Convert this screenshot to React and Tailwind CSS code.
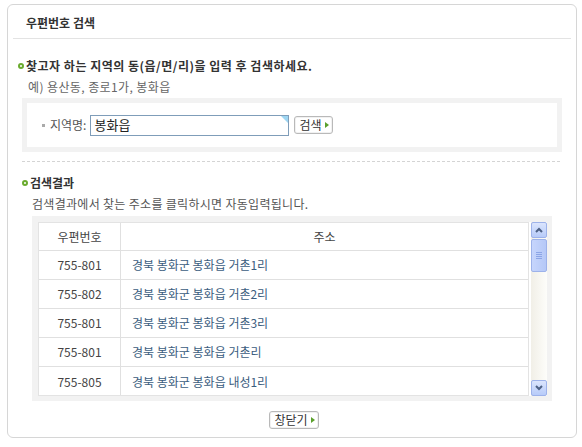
import React from "react";

const rows = [
  { zip: "755-801", addr: "경북 봉화군 봉화읍 거촌1리" },
  { zip: "755-802", addr: "경북 봉화군 봉화읍 거촌2리" },
  { zip: "755-801", addr: "경북 봉화군 봉화읍 거촌3리" },
  { zip: "755-801", addr: "경북 봉화군 봉화읍 거촌리" },
  { zip: "755-805", addr: "경북 봉화군 봉화읍 내성1리" },
];

function Bullet() {
  return (
    <span className="inline-block w-[6px] h-[6px] rounded-full border-2 border-[#6aab2e] bg-white" />
  );
}

function SmallButton({ children }) {
  return (
    <button className="h-[18px] pl-[4px] pr-[3px] flex items-center gap-[3px] rounded-[3px] border border-[#b9b9b9] bg-white text-[12px] text-[#333] leading-none shadow-[inset_0_0_0_1px_#f1f1f1]">
      {children}
      <span className="w-0 h-0 border-y-[3px] border-y-transparent border-l-[4px] border-l-[#5aa02c]" />
    </button>
  );
}

function ScrollBar() {
  return (
    <div className="w-[16px] ml-[2px] flex flex-col bg-gradient-to-r from-[#f1efe7] to-[#fdfdfa]">
      {/* up */}
      <div className="h-[16px] rounded-[2px] border border-[#9db2ea] bg-gradient-to-b from-[#dbe5fd] to-[#b7cbf9] flex items-center justify-center">
        <svg width="8" height="6" viewBox="0 0 8 6">
          <path d="M1 5 L4 2 L7 5" stroke="#4d6185" strokeWidth="2" fill="none" />
        </svg>
      </div>
      {/* thumb */}
      <div className="h-[33px] mt-[1px] rounded-[2px] border border-[#9db2ea] bg-gradient-to-r from-[#c6d5fc] to-[#b5c8f7] flex flex-col items-center justify-center gap-[1px]">
        <span className="w-[6px] h-[1px] bg-[#8ca5e6]" />
        <span className="w-[6px] h-[1px] bg-[#8ca5e6]" />
        <span className="w-[6px] h-[1px] bg-[#8ca5e6]" />
        <span className="w-[6px] h-[1px] bg-[#8ca5e6]" />
      </div>
      <div className="flex-1" />
      {/* down */}
      <div className="h-[16px] rounded-[2px] border border-[#9db2ea] bg-gradient-to-b from-[#dbe5fd] to-[#b7cbf9] flex items-center justify-center">
        <svg width="8" height="6" viewBox="0 0 8 6">
          <path d="M1 1 L4 4 L7 1" stroke="#4d6185" strokeWidth="2" fill="none" />
        </svg>
      </div>
    </div>
  );
}

export default function App() {
  return (
    <div
      className="w-[582px] h-[447px] bg-white pt-[4px] pl-[7px]"
      style={{ fontFamily: '"Noto Sans CJK KR", "Noto Sans", sans-serif' }}
    >
      <div className="w-[570px] h-[434px] border border-[#d6d6d6] rounded-[6px] flex flex-col">
        {/* title */}
        <div className="h-[34px] mx-[5px] border-b border-[#e3e3e3] flex items-center pl-[13px] pt-[2px]">
          <span className="text-[12px] font-bold text-[#333] leading-none">우편번호 검색</span>
        </div>

        {/* search section */}
        <div className="pl-[10px] pt-[21px] flex items-center gap-[2px]">
          <Bullet />
          <span className="text-[12px] font-bold text-[#333] leading-none tracking-[0.5px]">
            찾고자 하는 지역의 동(읍/면/리)을 입력 후 검색하세요.
          </span>
        </div>
        <div className="pl-[20px] pt-[9px] text-[12px] text-[#666] leading-none tracking-[0.4px]">
          예) 용산동, 종로1가, 봉화읍
        </div>

        <div className="ml-[14px] mt-[5px] w-[540px] h-[54px] bg-[#f2f2f2] p-[5px]">
          <div className="w-full h-full bg-white flex items-center pl-[15px]">
            <span className="w-[3px] h-[3px] bg-[#aaa] mr-[5px]" />
            <span className="text-[12px] text-[#555] leading-none">지역명:</span>
            <div className="relative ml-[4px] w-[199px] h-[21px] border border-[#7f9db9] flex items-center pl-[3px] text-[13px] text-[#222]">
              봉화읍
              <span className="absolute top-0 right-0 w-0 h-0 border-t-[7px] border-t-[#9ed6f2] border-l-[7px] border-l-transparent" />
            </div>
            <div className="ml-[5px]">
              <SmallButton>검색</SmallButton>
            </div>
          </div>
        </div>

        <div className="ml-[14px] mt-[9px] w-[538px] border-t border-dashed border-[#d4d4d4]" />

        {/* results */}
        <div className="pl-[14px] pt-[15px] flex items-center gap-[2px]">
          <Bullet />
          <span className="text-[12px] font-bold text-[#333] leading-none">검색결과</span>
        </div>
        <div className="pl-[24px] pt-[9px] text-[12px] text-[#555] leading-none tracking-[0.3px]">
          검색결과에서 찾는 주소를 클릭하시면 자동입력됩니다.
        </div>

        <div className="ml-[24px] mt-[6px] w-[520px] h-[185px] bg-[#f2f2f2] pt-[6px] pl-[6px] pr-[5px] pb-[5px]">
          <div className="w-full h-full flex bg-white">
            <div className="flex-1 border border-[#e3e3e3] overflow-hidden">
              <div className="flex h-[28px] border-b border-[#e0e0e0] text-[12px] text-[#444]">
                <div className="w-[82px] border-r border-[#e0e0e0] flex items-center justify-center">우편번호</div>
                <div className="flex-1 flex items-center justify-center">주소</div>
              </div>
              {rows.map((r, i) => (
                <div
                  key={i}
                  className={`flex h-[29px] text-[12px] ${i < rows.length - 1 ? "border-b border-[#e0e0e0]" : ""}`}
                >
                  <div className="w-[82px] border-r border-[#e0e0e0] flex items-center justify-center text-[#444]">
                    {r.zip}
                  </div>
                  <div className="flex-1 flex items-center pl-[11px] text-[#3b5d7e]">{r.addr}</div>
                </div>
              ))}
            </div>
            <ScrollBar />
          </div>
        </div>

        <div className="flex justify-center pt-[10px] pl-[4px]">
          <SmallButton>창닫기</SmallButton>
        </div>
      </div>
    </div>
  );
}
